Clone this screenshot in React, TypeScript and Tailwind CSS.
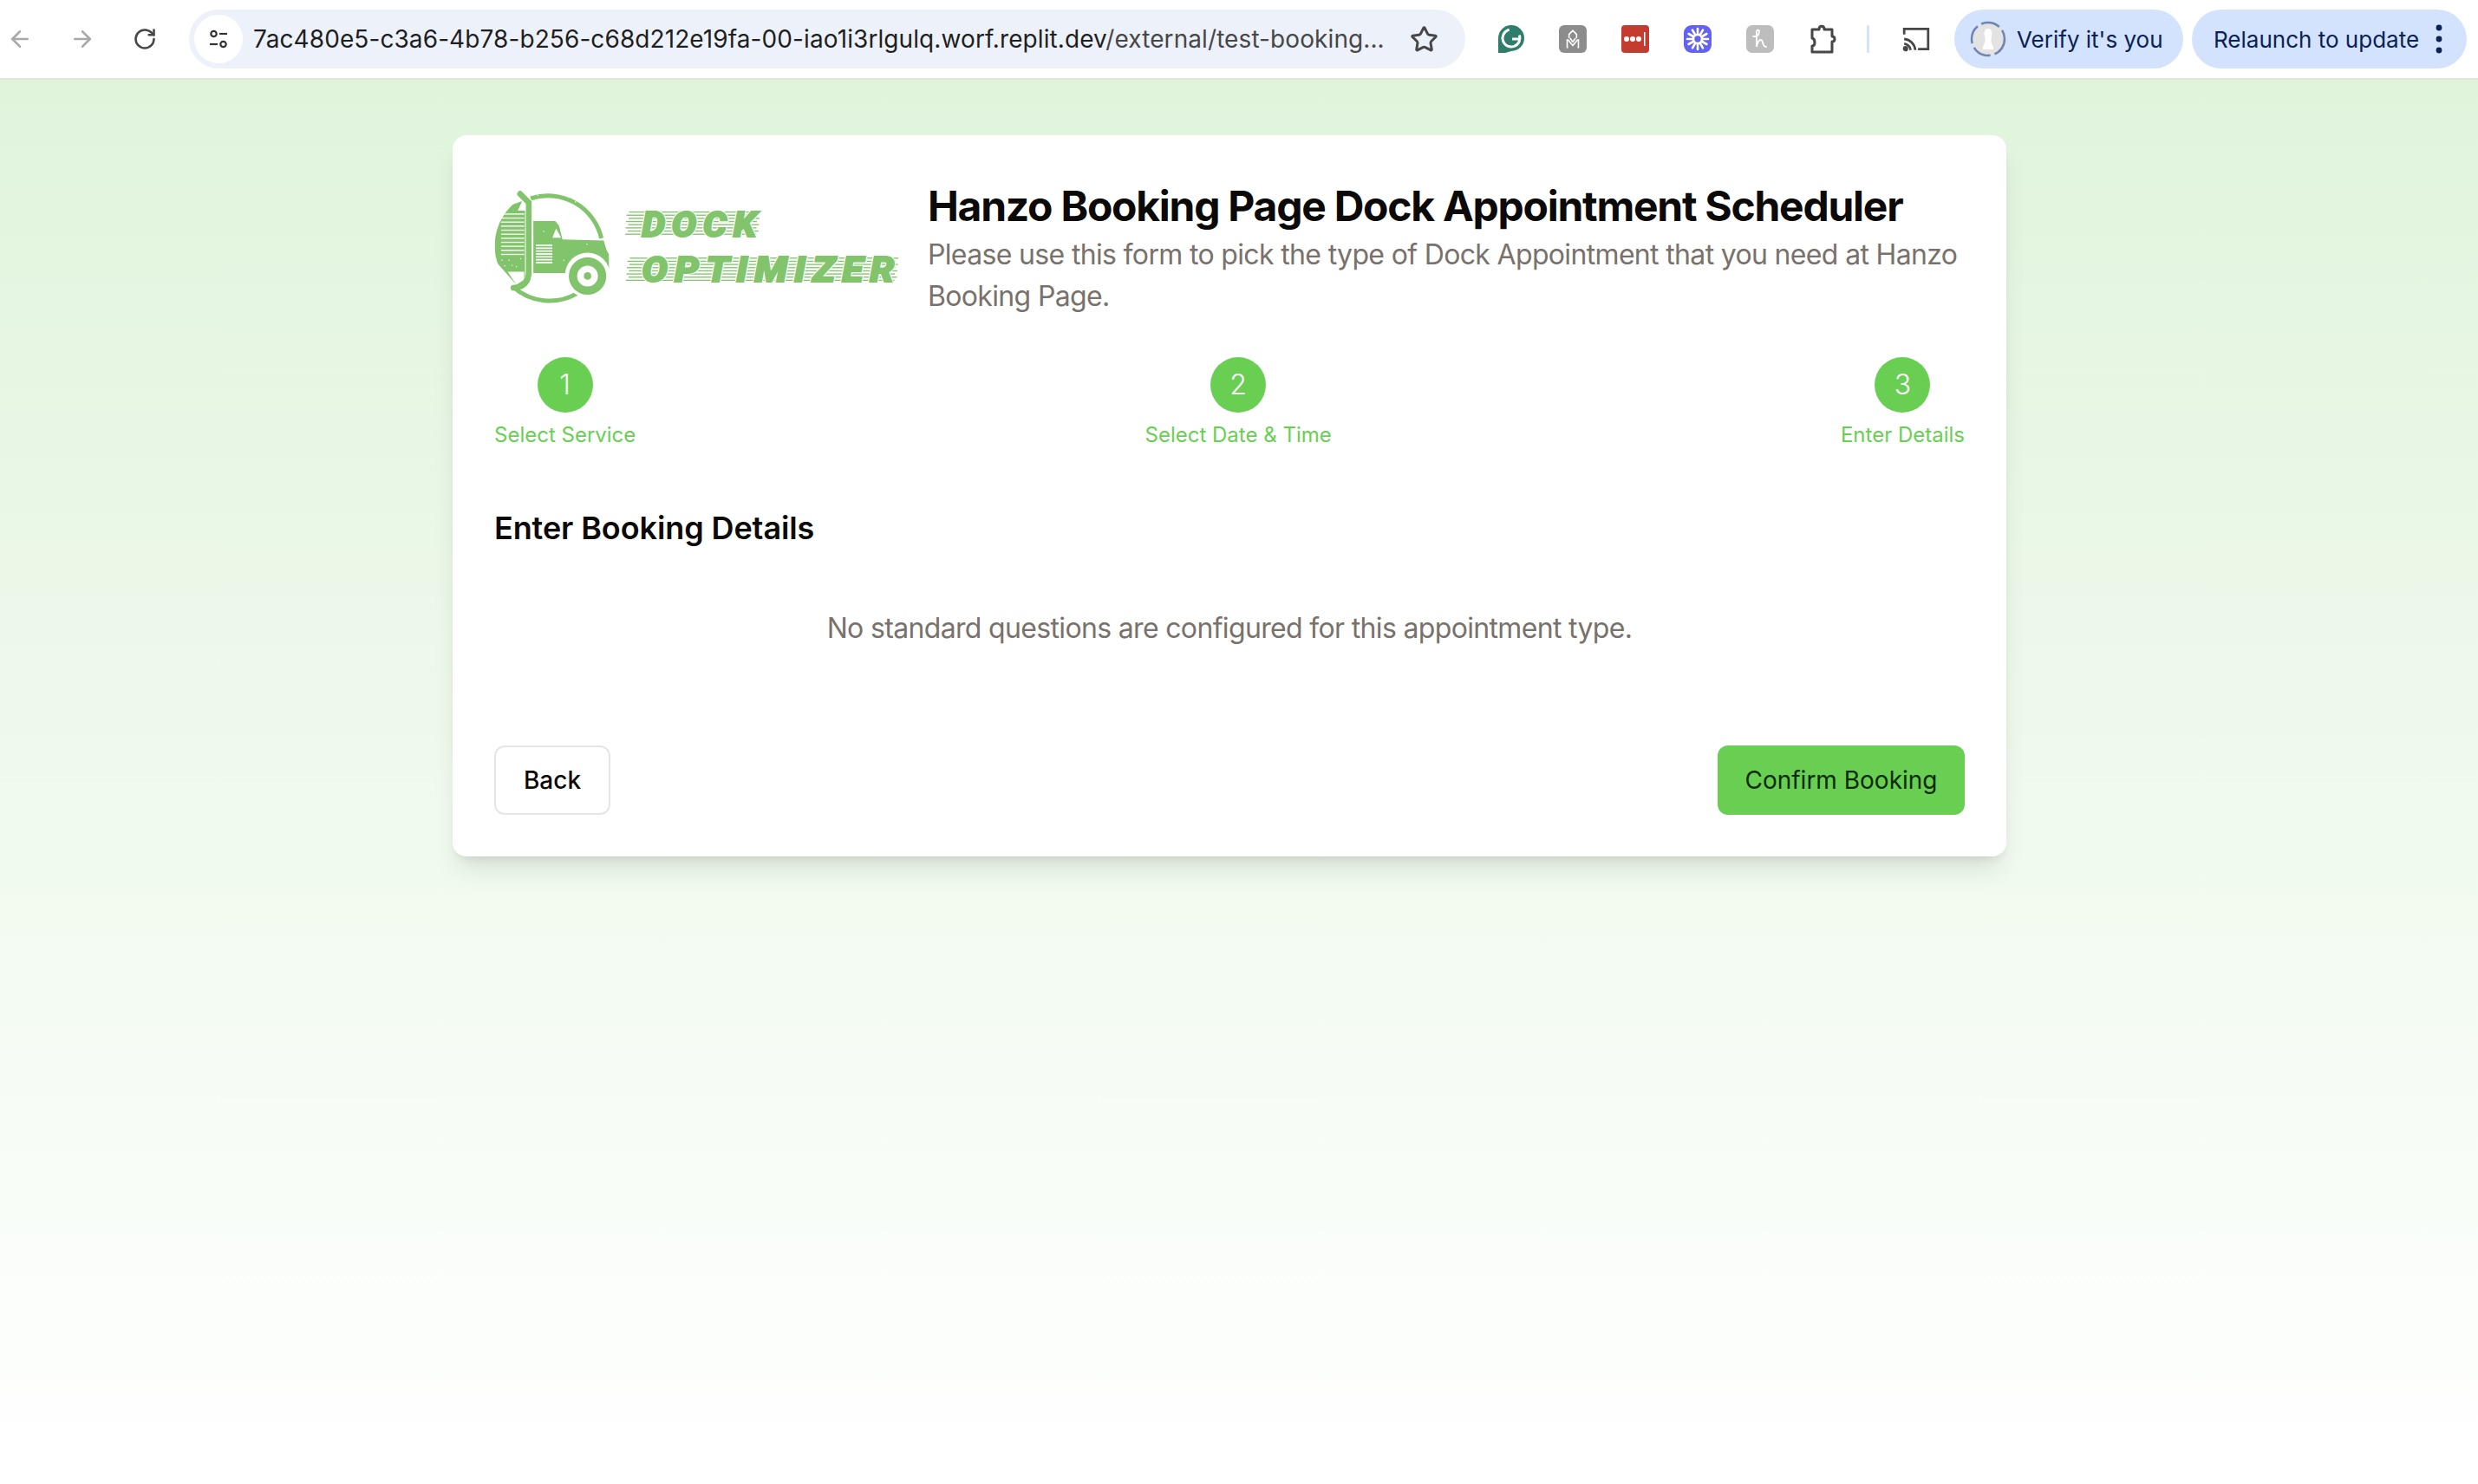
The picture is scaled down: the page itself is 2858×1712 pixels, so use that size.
import { ArrowLeft, ArrowRight, RotateCw, Star } from "lucide-react";

function Streaks({ y0, x0, x1 }: { y0: number; x0: number; x1: number }) {
  const rows = [0, 11, 22, 33, 44, 55, 66, 77];
  return (
    <g fill="#82c46c">
      {rows.map((d, i) => (
        <rect key={d} x={x0 + (i % 2 === 0 ? 8 : 0) - i * 0.8} y={y0 + d + 3} width={x1 - x0 - 8} height={4} />
      ))}
    </g>
  );
}

function Logo() {
  const speckles = [
    [125, 320], [140, 300], [165, 322], [180, 295], [115, 300], [150, 318], [240, 75], [370, 98], [260, 200], [410, 245], [330, 300],
  ];
  return (
    <svg viewBox="90 50 1410 400" className="w-[470px] h-[133px] shrink-0" aria-label="Dock Optimizer logo">
      <defs>
        <clipPath id="disc">
          <circle cx="285" cy="250" r="195" />
        </clipPath>
      </defs>
      <path d="M215 86 A190 190 0 0 1 460 224" fill="none" stroke="#82c46c" strokeWidth="15" />
      <path d="M155 394 A190 190 0 0 0 375 416" fill="none" stroke="#82c46c" strokeWidth="15" />
      <g clipPath="url(#disc)">
        <path d="M185 95 L170 128 L195 128 L195 385 L165 385 L90 300 L90 130 Z" fill="#82c46c" />
        <g fill="#ffffff">
          {[138, 152, 166, 180, 194, 208, 222, 236, 250, 264, 278].map((y) => (
            <rect key={y} x="112" y={y} width="80" height="4" />
          ))}
          <path d="M135 340 L192 340 L192 368 L165 385 Z" />
        </g>
      </g>
      <path d="M178 70 L208 100 L208 340 Q208 392 155 396" fill="none" stroke="#82c46c" strokeWidth="20" strokeLinecap="round" />
      <path d="M224 164 L300 164 L313 180 L325 228 L468 232 L478 265 L486 280 L486 345 L350 345 L224 345 Z" fill="#82c46c" />
      <path d="M290 222 L303 190 L320 222 Z" fill="#ffffff" />
      <g fill="#ffffff">
        {[246, 256, 266, 276, 286, 296, 306].map((y) => (
          <rect key={y} x="233" y={y} width="57" height="5" />
        ))}
      </g>
      <circle cx="412" cy="352" r="78" fill="#ffffff" />
      <circle cx="412" cy="355" r="65" fill="#82c46c" />
      <circle cx="412" cy="355" r="36" fill="#ffffff" />
      <circle cx="412" cy="355" r="13" fill="#82c46c" />
      <g fill="#ffffff">
        {speckles.map(([x, y]) => (
          <circle key={`${x}-${y}`} cx={x} cy={y} r="2.2" />
        ))}
      </g>
      <Streaks y0={128} x0={548} x1={1010} />
      <Streaks y0={288} x0={551} x1={1490} />
      <g fontFamily="Roboto, sans-serif" fontWeight="900" fontStyle="italic">
        <g fill="#ffffff" stroke="#ffffff" strokeWidth="12">
          <text x="600" y="217" fontSize="124" letterSpacing="22" textLength="420" lengthAdjust="spacingAndGlyphs">DOCK</text>
          <text x="600" y="375" fontSize="122" letterSpacing="22" textLength="900" lengthAdjust="spacingAndGlyphs">OPTIMIZER</text>
        </g>
        <g fill="#82c46c" stroke="#82c46c" strokeWidth="6">
          <text x="600" y="217" fontSize="124" letterSpacing="22" textLength="420" lengthAdjust="spacingAndGlyphs">DOCK</text>
          <text x="600" y="375" fontSize="122" letterSpacing="22" textLength="900" lengthAdjust="spacingAndGlyphs">OPTIMIZER</text>
        </g>
      </g>
    </svg>
  );
}

function Toolbar() {
  return (
    <header className="h-[92px] bg-white border-b-2 border-[#e1e5e0] flex items-center font-['Inter',sans-serif] text-[#1f1f1f] relative">
      <ArrowLeft className="w-[30px] h-[30px] ml-[8px] text-[#a9a9a9]" strokeWidth={2} />
      <ArrowRight className="w-[30px] h-[30px] ml-[42px] text-[#a9a9a9]" strokeWidth={2} />
      <RotateCw className="w-[28px] h-[28px] ml-[43px] text-[#474747]" strokeWidth={2.2} />
      <div className="ml-[37px] w-[1472px] h-[68px] rounded-full bg-[#edf2fa] flex items-center pl-[6px]">
        <div className="w-[56px] h-[56px] rounded-full bg-white flex items-center justify-center shrink-0">
          <svg viewBox="0 0 28 28" className="w-[28px] h-[28px]" fill="none" stroke="#333" strokeWidth="2.2">
            <circle cx="8.5" cy="8" r="3.2" />
            <path d="M15 8h9" />
            <circle cx="19.5" cy="20" r="3.2" />
            <path d="M4 20h9" />
          </svg>
        </div>
        <span className="ml-[12px] text-[28px] leading-[34px] whitespace-nowrap tracking-[0.09px]">
          7ac480e5-c3a6-4b78-b256-c68d212e19fa-00-iao1i3rlgulq.worf.replit.dev<span className="text-[#474747]">/external/test-booking...</span>
        </span>
        <Star className="w-[33px] h-[33px] ml-auto mr-[31px] text-[#474747]" strokeWidth={2.2} />
      </div>
      <div className="ml-[37px] flex items-center">
        <svg viewBox="0 0 32 34" className="w-[32px] h-[34px]">
          <path d="M1 33 V16 A15 15 0 1 1 16 31 L9 33 Z" fill="#2f7d6b" />
          <circle cx="16" cy="16" r="10" fill="none" stroke="#ffffff" strokeWidth="3" strokeDasharray="48 15" transform="rotate(-20 16 16)" />
          <path d="M17 17h9" stroke="#ffffff" strokeWidth="3" />
        </svg>
        <div className="ml-[39px] w-[32px] h-[32px] rounded-[6px] bg-[#8c8c8c] flex items-center justify-center">
          <svg viewBox="0 0 24 24" className="w-[26px] h-[26px]" fill="none" stroke="#ffffff" strokeWidth="1.5">
            <path d="M7 21h-1v-8h1l5 6 5-6h1v8h-1M8 11V7l4-4 4 4v4M9 11l3 4 3-4" />
          </svg>
        </div>
        <div className="ml-[40px] w-[32px] h-[32px] rounded-[4px] bg-[#c43c30] flex items-center justify-center">
          <svg viewBox="0 0 32 32" className="w-[32px] h-[32px]" fill="#ffffff">
            <circle cx="6" cy="16" r="3" />
            <circle cx="13" cy="16" r="3" />
            <circle cx="20" cy="16" r="3" />
            <rect x="26" y="8" width="1.5" height="16" />
          </svg>
        </div>
        <div className="ml-[40px] w-[32px] h-[32px] rounded-[9px] bg-[#6363f1] flex items-center justify-center">
          <svg viewBox="0 0 32 32" className="w-[32px] h-[32px]" stroke="#ffffff" strokeWidth="2.6" strokeLinecap="round">
            {[0, 30, 60, 90, 120, 150, 180, 210, 240, 270, 300, 330].map((a) => (
              <path key={a} d="M16 10V4" transform={`rotate(${a} 16 16)`} />
            ))}
            <circle cx="16" cy="16" r="5" fill="none" />
          </svg>
        </div>
        <div className="ml-[40px] w-[32px] h-[32px] rounded-[7px] bg-[#bdbdbd] flex items-center justify-center">
          <svg viewBox="0 0 32 32" className="w-[32px] h-[32px]" fill="none" stroke="#ffffff" strokeWidth="1.8" strokeLinecap="round">
            <path d="M8 13c4 1 7-2 7-5 0-3-3-3-3 0 0 5 0 11 0 17 1-5 2-8 5-8 3 0 1 8 6 8" />
          </svg>
        </div>
        <svg viewBox="0 0 32 36" className="ml-[41px] w-[32px] h-[36px]" fill="none" stroke="#474747" strokeWidth="3" strokeLinejoin="round">
          <path d="M3 7h8c0-5 6-5 6 0h9v8c4 0 4 6 0 6v12H3v-7c4 0 4-8 0-9Z" />
        </svg>
        <div className="ml-[34px] w-[3px] h-[32px] rounded-full bg-[#d3e3fd]" />
        <svg viewBox="0 0 32 32" className="ml-[37px] w-[34px] h-[34px]" fill="none" stroke="#474747" strokeWidth="2.6">
          <path d="M3 11V5h26v22H18" />
          <path d="M3 16a13 13 0 0 1 12 12M3 21a8 8 0 0 1 7 7" />
          <circle cx="4.5" cy="26.5" r="1.6" fill="#474747" />
        </svg>
      </div>
      <div className="ml-[27px] w-[264px] h-[68px] rounded-full bg-[#d3e3fd] flex items-center text-[#0a2255] text-[26px] shrink-0">
        <svg viewBox="0 0 42 42" className="w-[42px] h-[42px] ml-[18px]">
          <circle cx="21" cy="21" r="19" fill="#e3e3e3" stroke="#6f84b5" strokeWidth="2.5" strokeDasharray="22 5" />
          <path d="M21 9c4 0 5 4 4 9-1 4-1 6 2 12v3H15v-3c3-6 3-8 2-12-1-5 0-9 4-9Z" fill="#ffffff" />
        </svg>
        <span className="ml-[12px] whitespace-nowrap">Verify it's you</span>
      </div>
      <div className="ml-[10px] w-[317px] h-[68px] rounded-full bg-[#d3e3fd] flex items-center text-[#0a2255] text-[26px] shrink-0">
        <span className="ml-[25px] whitespace-nowrap">Relaunch to update</span>
        <svg viewBox="0 0 8 40" className="w-[8px] h-[40px] ml-[19px]" fill="#0a2255">
          <circle cx="4" cy="7" r="3.4" />
          <circle cx="4" cy="20" r="3.4" />
          <circle cx="4" cy="33" r="3.4" />
        </svg>
      </div>
    </header>
  );
}

function Step({ n, label }: { n: number; label: string }) {
  return (
    <div className="flex flex-col items-center">
      <div className="w-[64px] h-[64px] rounded-full bg-[#69cf53] text-white text-[32px] font-light flex items-center justify-center">{n}</div>
      <div className="mt-[10px] text-[24px] leading-[32px] text-[#69cf53]">{label}</div>
    </div>
  );
}

export default function App() {
  return (
    <div className="w-[2858px] h-[1712px] overflow-hidden bg-white font-['Inter',sans-serif] flex flex-col">
      <Toolbar />
      <main className="flex-1 bg-gradient-to-b from-[#e0f4dc] to-[#ffffff] flex justify-center items-start pt-[64px] pr-[22px]">
        <section className="w-[1792px] h-[832px] bg-white rounded-[16px] shadow-[0_20px_30px_-6px_rgba(0,0,0,0.1),0_8px_12px_-6px_rgba(0,0,0,0.1)] px-[48px] pt-[48px]">
          <div className="flex">
            <div className="mt-[13px]">
              <Logo />
            </div>
            <div className="ml-[30px] pt-[6px]">
              <h1 className="text-[48px] leading-[56px] font-bold text-[#0c0a09] whitespace-nowrap tracking-[-1.26px]">
                Hanzo Booking Page Dock Appointment Scheduler
              </h1>
              <p className="mt-[4px] text-[32px] leading-[48px] text-[#78716c] tracking-[-0.66px]">
                Please use this form to pick the type of Dock Appointment that you need at Hanzo Booking Page.
              </p>
            </div>
          </div>
          <div className="flex justify-between mt-[46px]">
            <Step n={1} label="Select Service" />
            <Step n={2} label="Select Date & Time" />
            <Step n={3} label="Enter Details" />
          </div>
          <h2 className="mt-[67px] text-[36px] leading-[48px] font-semibold text-[#0c0a09] tracking-[-0.1px]">Enter Booking Details</h2>
          <p className="mt-[68px] text-center text-[32px] leading-[48px] text-[#78716c] tracking-[-0.66px]">
            No standard questions are configured for this appointment type.
          </p>
          <div className="flex justify-between mt-[111px]">
            <button className="h-[80px] w-[134px] rounded-[12px] border-2 border-[#e7e5e4] bg-white text-[28px] font-medium text-[#0c0a09]">Back</button>
            <button className="h-[80px] w-[285px] rounded-[12px] bg-[#69cf53] text-[28px] font-normal text-[#0c2a06]">Confirm Booking</button>
          </div>
        </section>
      </main>
    </div>
  );
}
